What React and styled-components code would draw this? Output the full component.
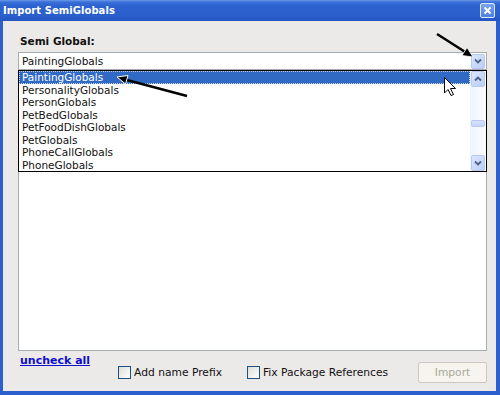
import styled, { createGlobalStyle } from 'styled-components';

const GlobalStyle = createGlobalStyle`
    html, body {
        margin: 0;
        padding: 0;
        background: #ffffff;
    }
    body {
        font-family: "DejaVu Sans", Verdana, sans-serif;
    }
`;

const Window = styled.div`
    position: relative;
    display: flex;
    flex-direction: column;
    width: 500px;
    height: 395px;
    overflow: hidden;
    background: #2d5fcf;
`;

const TitleBar = styled.div`
    display: flex;
    align-items: center;
    justify-content: space-between;
    height: 21px;
    padding: 0 5px 0 3px;
    box-sizing: border-box;
    background: linear-gradient(#6a9ae6 0px, #3a6fd8 2px, #2c62d0 6px, #2a5ecb 16px, #2456c2 21px);
`;

const Title = styled.span`
    font-family: "DejaVu Sans", Verdana, sans-serif;
    font-weight: bold;
    font-size: 10px;
    color: #ffffff;
    letter-spacing: 0.05px;
`;

const CloseButton = styled.div`
    display: flex;
    align-items: center;
    justify-content: center;
    width: 13px;
    height: 13px;
    border: 1px solid #dfe8f8;
    border-radius: 2px;
    background: linear-gradient(#7aa4ee, #4c7fe0);
`;

const Body = styled.div`
    display: flex;
    flex-direction: column;
    flex: 1;
    padding: 14px 9px 0 15px;
    margin: 0 4px 4px 3px;
    background: #ece9e9;
`;

const Label = styled.div`
    height: 17px;
    font-weight: bold;
    font-size: 10.5px;
    color: #111;
    padding-left: 2px;
`;

const ComboArea = styled.div`
    position: relative;
    display: flex;
    flex-direction: column;
    flex: 1;
`;

const Combo = styled.div`
    display: flex;
    align-items: center;
    justify-content: space-between;
    height: 18px;
    box-sizing: border-box;
    border: 1px solid #a5acb2;
    background: #ffffff;
    padding: 0 1px 0 3px;
    font-size: 10.5px;
    color: #111;
`;

const ScrollButton = styled.div`
    display: flex;
    align-items: center;
    justify-content: center;
    width: 14px;
    height: ${(p) => p.$h || 16}px;
    box-sizing: border-box;
    border: 1px solid #b8c9ef;
    border-radius: 2px;
    background: linear-gradient(135deg, #dbe6fd, #b9cdf8);
`;

const Panel = styled.div`
    flex: 1;
    background: #ffffff;
    border: 1px solid #a5acb2;
    border-top: none;
    margin-bottom: 2px;
`;

const DropList = styled.div`
    position: absolute;
    top: 18px;
    left: 0;
    right: 0;
    display: flex;
    height: 102px;
    box-sizing: border-box;
    border: 1px solid #000000;
    background: #ffffff;
`;

const Rows = styled.div`
    flex: 1;
    display: flex;
    flex-direction: column;
`;

const Row = styled.div`
    height: 12.5px;
    line-height: 12.5px;
    padding-left: 3px;
    font-size: 10.5px;
    white-space: nowrap;
    box-sizing: border-box;
    color: ${(p) => (p.$selected ? '#ffffff' : '#111111')};
    background: ${(p) => (p.$selected ? '#316ac5' : 'transparent')};
    outline: ${(p) => (p.$selected ? '1px dotted #c8d4ea' : 'none')};
    outline-offset: -1px;
`;

const ScrollBar = styled.div`
    display: flex;
    flex-direction: column;
    justify-content: space-between;
    align-items: center;
    width: 16px;
    padding: 0 1px;
    box-sizing: border-box;
    background: linear-gradient(90deg, #eef3fd, #fbfcfe);
`;

const Thumb = styled.div`
    width: 14px;
    height: 7px;
    margin-top: 4px;
    box-sizing: border-box;
    border: 1px solid #b8c9ef;
    border-radius: 2px;
    background: linear-gradient(#d7e3fc, #c3d5fb);
`;

const Footer = styled.div`
    display: flex;
    align-items: center;
    height: 38px;
`;

const Link = styled.a`
    align-self: flex-start;
    margin: 1px 0 0 2px;
    font-weight: bold;
    font-size: 11px;
    color: #1010c8;
    text-decoration: underline;
`;

const Option = styled.label`
    display: flex;
    align-items: center;
    gap: 3px;
    margin-left: ${(p) => p.$gap}px;
    font-size: 10.7px;
    color: #111;
`;

const Box = styled.span`
    display: inline-block;
    width: 13px;
    height: 13px;
    box-sizing: border-box;
    border: 1px solid #1c5180;
    background: linear-gradient(135deg, #dcdcd6, #ffffff);
`;

const ImportButton = styled.div`
    display: flex;
    align-items: center;
    justify-content: center;
    width: 69px;
    height: 21px;
    box-sizing: border-box;
    margin-left: auto;
    border: 1px solid #cbc9bf;
    border-radius: 2px;
    background: #f5f4ef;
    font-size: 10.7px;
    color: #aca899;
`;

const Overlay = styled.svg`
    position: absolute;
    left: 0;
    top: 0;
    pointer-events: none;
`;

const Chevron = ({ up }) => (
    <svg width="8" height="6" viewBox="0 0 8 6">
        <path
            d={up ? 'M1 4.5 L4 1.5 L7 4.5' : 'M1 1.5 L4 4.5 L7 1.5'}
            fill="none"
            stroke="#4d6185"
            strokeWidth="1.8"
        />
    </svg>
);

const items = [
    'PaintingGlobals',
    'PersonalityGlobals',
    'PersonGlobals',
    'PetBedGlobals',
    'PetFoodDishGlobals',
    'PetGlobals',
    'PhoneCallGlobals',
    'PhoneGlobals',
];

export default function App() {
    return (
        <>
            <GlobalStyle />
            <Window>
                <TitleBar>
                    <Title>Import SemiGlobals</Title>
                    <CloseButton>
                        <svg width="9" height="9" viewBox="0 0 9 9">
                            <path d="M1.5 1.5 L7.5 7.5 M7.5 1.5 L1.5 7.5" stroke="#fff" strokeWidth="2" />
                        </svg>
                    </CloseButton>
                </TitleBar>
                <Body>
                    <Label>Semi Global:</Label>
                    <ComboArea>
                        <Combo>
                            <span>PaintingGlobals</span>
                            <ScrollButton $h={15}>
                                <Chevron />
                            </ScrollButton>
                        </Combo>
                        <Panel />
                        <DropList>
                            <Rows>
                                {items.map((name, i) => (
                                    <Row key={name} $selected={i === 0}>
                                        {name}
                                    </Row>
                                ))}
                            </Rows>
                            <ScrollBar>
                                <ScrollButton>
                                    <Chevron up />
                                </ScrollButton>
                                <Thumb />
                                <ScrollButton>
                                    <Chevron />
                                </ScrollButton>
                            </ScrollBar>
                        </DropList>
                    </ComboArea>
                    <Footer>
                        <Link href="#">uncheck all</Link>
                        <Option $gap={28}>
                            <Box />
                            Add name Prefix
                        </Option>
                        <Option $gap={25}>
                            <Box />
                            Fix Package References
                        </Option>
                        <ImportButton>Import</ImportButton>
                    </Footer>
                </Body>
                <Overlay width="500" height="395" viewBox="0 0 500 395">
                    <line x1="187" y1="96" x2="125" y2="79.5" stroke="#000" strokeWidth="2.5" />
                    <polygon
                        points="117,77 128,75.5 125.5,84"
                        fill="#000"
                        stroke="#fff"
                        strokeWidth="1"
                        strokeLinejoin="round"
                    />
                    <line x1="437" y1="34" x2="466" y2="52.5" stroke="#000" strokeWidth="2.5" />
                    <polygon
                        points="473,57 462,55.5 467,47.5"
                        fill="#000"
                        stroke="#fff"
                        strokeWidth="0.8"
                        strokeLinejoin="round"
                    />
                    <path
                        d="M444.5 77.5 L444.5 93 L448 89.5 L451 95.5 L453.5 94.5 L450.5 88.5 L455.5 88.5 Z"
                        fill="#fff"
                        stroke="#000"
                        strokeWidth="1"
                        strokeLinejoin="miter"
                    />
                </Overlay>
            </Window>
        </>
    );
}
